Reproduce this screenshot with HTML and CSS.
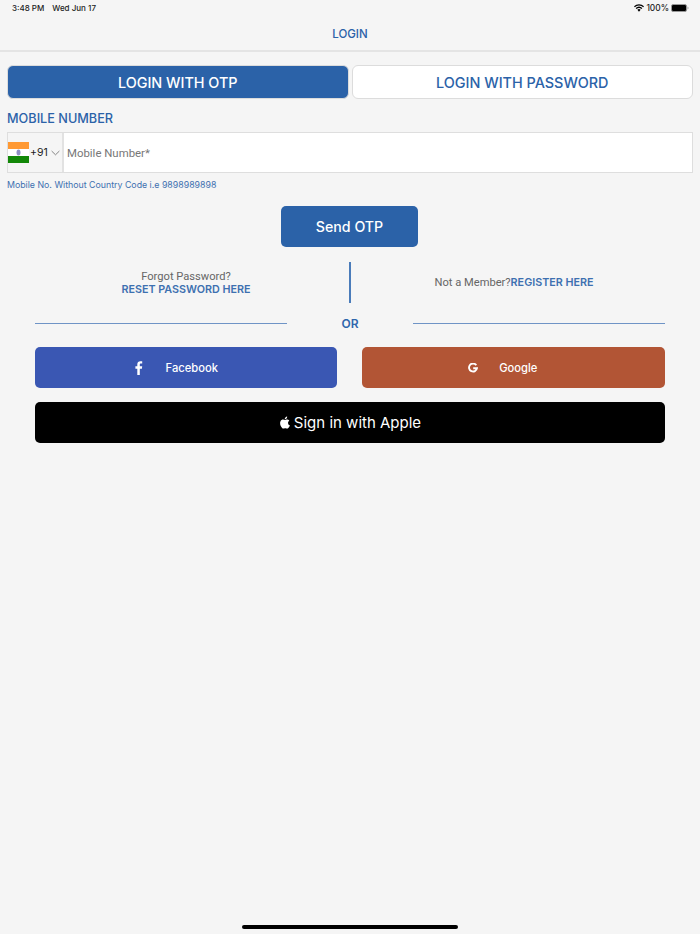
FILE: index.html
```html
<!DOCTYPE html>
<html lang="en">
<head>
  <meta charset="UTF-8" />
  <meta name="viewport" content="width=device-width, initial-scale=1" />
  <title>Login</title>
  <link rel="stylesheet" href="styles.css">
</head>
<body>
  <div class="screen">
    <div class="status-bar">
      <div class="status-left"><span>3:48 PM</span><span>Wed Jun 17</span></div>
      <div class="status-right">
        <svg class="wifi" width="10" height="8" viewBox="0 0 11 8"><path d="M5.500 8 3.700 6a2.600 2.600 0 0 1 3.600 0zM2.800 5.100 1.800 4a5.400 5.400 0 0 1 7.400 0l-1 1.100a4 4 0 0 0-5.400 0zM.9 3.100 0 2.100a8 8 0 0 1 11 0l-.9 1a6.700 6.700 0 0 0-9.200 0z" fill="#000"/></svg>
        <span>100%</span>
        <svg class="battery" width="18" height="8" viewBox="0 0 18 8"><rect x=".5" y=".5" width="15" height="7" rx="1.600" fill="#000" stroke="#999"/><path d="M16.500 2.600c.7.2 1 .7 1 1.400s-.3 1.200-1 1.400z" fill="#999"/></svg>
      </div>
    </div>

    <div class="nav-bar">LOGIN</div>

    <div class="tabs">
      <button class="tab tab-active">LOGIN WITH OTP</button>
      <button class="tab">LOGIN WITH PASSWORD</button>
    </div>

    <div class="field-label">MOBILE NUMBER</div>
    <div class="phone-group">
      <div class="country">
        <svg class="flag" width="21" height="21" viewBox="0 0 21 21">
          <rect width="21" height="7" fill="#ff9933"/>
          <rect y="7" width="21" height="7" fill="#fff"/>
          <rect y="14" width="21" height="7" fill="#138808"/>
          <ellipse cx="10.5" cy="10.5" rx="2" ry="3" fill="#8f8fc4"/>
        </svg>
        <span class="dial">+91</span>
        <svg class="chevron" width="9" height="6" viewBox="0 0 10 6"><path d="M.7.8 5 5 9.300.8" fill="none" stroke="#777" stroke-width="1"/></svg>
      </div>
      <div class="phone-input">Mobile Number*</div>
    </div>
    <div class="hint">Mobile No. Without Country Code i.e 9898989898</div>

    <div class="send-row"><button class="send-btn">Send OTP</button></div>

    <div class="links">
      <div class="link-col">
        <div class="muted">Forgot Password?</div>
        <div class="link-strong">RESET PASSWORD HERE</div>
      </div>
      <div class="links-divider"></div>
      <div class="link-col">
        <div><span class="muted">Not a Member?</span><span class="link-strong">REGISTER HERE</span></div>
      </div>
    </div>

    <div class="or-row">
      <div class="or-line"></div>
      <div class="or-text">OR</div>
      <div class="or-line"></div>
    </div>

    <div class="social">
      <div class="social-row">
        <button class="social-btn facebook">
          <svg width="8" height="14" viewBox="0 0 8 14"><path d="M2.300 14V7.700H.4V5.200h1.900V3.400C2.300 1.300 3.500.2 5.300.2c.9 0 1.600.1 1.900.1v2.200H6c-1 0-1.200.5-1.200 1.200v1.500h2.400l-.3 2.500H4.800V14z" fill="#fff"/></svg>
          <span>Facebook</span>
        </button>
        <button class="social-btn google">
          <svg width="10" height="10" viewBox="0 0 10 10"><path d="M8.300 2.200A4 4 0 1 0 9 5.200H5.200" fill="none" stroke="#fff" stroke-width="1.900"/></svg>
          <span>Google</span>
        </button>
      </div>
      <button class="apple-btn">
        <svg width="11" height="13" viewBox="0 0 14 17"><path d="M11.600 9c0-1.900 1.600-2.800 1.700-2.900-.9-1.300-2.300-1.500-2.800-1.500-1.200-.1-2.300.7-2.900.7s-1.500-.7-2.500-.7C3.800 4.600 2.600 5.300 1.900 6.500.5 8.900 1.500 12.500 2.900 14.500c.7 1 1.500 2.100 2.500 2 1 0 1.400-.6 2.600-.6s1.600.6 2.600.6 1.800-1 2.400-2c.8-1.100 1.100-2.200 1.100-2.300 0 0-2.500-.9-2.500-3.200zM9.700 3.200c.5-.7.9-1.600.8-2.600-.8 0-1.800.5-2.300 1.200-.5.6-1 1.500-.8 2.500.9 0 1.700-.5 2.300-1.100z" fill="#fff"/></svg>
        <span>Sign in with Apple</span>
      </button>
    </div>

    <div class="home-indicator"></div>
  </div>
</body>
</html>
```

FILE: styles.css
```css
* {
  box-sizing: border-box;
}
html, body {
  margin: 0;
  padding: 0;
}
body {
  background-color: #f5f5f5;
  font-family: 'Inter', 'Liberation Sans', sans-serif;
  color: #2b62a8;
}
button {
  font-family: inherit;
  cursor: pointer;
}
.screen {
  height: 934px;
  display: flex;
  flex-direction: column;
  overflow: hidden;
}

/* status bar */
.status-bar {
  height: 16px;
  padding: 0 11px 0 12px;
  display: flex;
  align-items: center;
  justify-content: space-between;
  font-size: 8.4px;
  font-weight: 500;
  color: #222;
}
.status-left {
  display: flex;
  gap: 8px;
  font-size: 8px;
}
.status-right {
  display: flex;
  align-items: center;
  gap: 2px;
}

/* nav */
.nav-bar {
  height: 36px;
  padding-top: 1px;
  border-bottom: 2px solid #e4e4e4;
  display: flex;
  align-items: center;
  justify-content: center;
  font-size: 11.5px;
  font-weight: 500;
}

/* tabs */
.tabs {
  margin: 13px 7px 0;
  display: flex;
  gap: 3px;
}
.tab {
  flex: 1;
  height: 34px;
  border: 1px solid #dcdcdc;
  border-radius: 6px;
  background-color: #fff;
  color: #2b62a8;
  font-size: 14.4px;
  font-weight: 500;
  padding: 0;
}
.tab-active {
  background-color: #2b62a8;
  color: #fff;
}

.field-label {
  margin: 12px 7px 0;
  height: 15px;
  line-height: 15px;
  font-size: 12.7px;
  font-weight: 500;
}

/* phone */
.phone-group {
  margin: 6px 7px 0;
  height: 41px;
  display: flex;
  border: 1px solid #dedede;
  background-color: #fff;
}
.country {
  width: 56px;
  background-color: #f5f5f5;
  border-right: 2px solid #e2e2e2;
  display: flex;
  align-items: center;
  flex-shrink: 0;
}
.flag {
  flex-shrink: 0;
}
.dial {
  margin-left: 1px;
  font-size: 10.5px;
  color: #222;
}
.chevron {
  margin-left: 3px;
}
.phone-input {
  flex: 1;
  padding-left: 3px;
  display: flex;
  align-items: center;
  font-family: 'Roboto', sans-serif;
  font-size: 11.4px;
  color: #777;
}
.hint {
  margin: 6px 7px 0;
  height: 11px;
  line-height: 11px;
  font-size: 8.8px;
  color: #3d70b0;
}

/* send */
.send-row {
  margin-top: 16px;
  padding-right: 1px;
  display: flex;
  justify-content: center;
}
.send-btn {
  width: 137px;
  height: 41px;
  border: none;
  border-radius: 5px;
  background-color: #2b62a8;
  color: #fff;
  font-size: 14.2px;
  font-weight: 500;
}

/* links */
.links {
  margin: 15px 35px 0;
  height: 41px;
  display: flex;
  gap: 12px;
}
.link-col {
  flex: 1;
  display: flex;
  flex-direction: column;
  align-items: center;
  justify-content: center;
  font-size: 10.75px;
  line-height: 13px;
}
.links-divider {
  width: 2px;
  background-color: #4a7cba;
}
.muted {
  font-family: 'Roboto', sans-serif;
  font-size: 11.15px;
  color: #666;
}
.link-strong {
  color: #3d70b0;
  font-weight: 600;
}

/* or */
.or-row {
  margin: 13px 35px 0;
  height: 14px;
  display: flex;
  align-items: center;
}
.or-line {
  flex: 1;
  height: 1px;
  background-color: #6f94c6;
}
.or-text {
  width: 126px;
  text-align: center;
  font-size: 12px;
  font-weight: 600;
  color: #2f66ac;
}

/* social */
.social {
  margin: 17px 35px 0;
  display: flex;
  flex-direction: column;
  gap: 14px;
}
.social-row {
  display: flex;
  gap: 25px;
}
.social-btn {
  flex: 1;
  height: 41px;
  border: none;
  border-radius: 5px;
  color: #fff;
  font-size: 11.2px;
  font-weight: 500;
  display: flex;
  align-items: center;
  justify-content: center;
  gap: 23px;
  padding: 0 19px 0 0;
}
.facebook {
  background-color: #3a57b3;
}
.google {
  background-color: #b25535;
  gap: 21px;
  padding-right: 21px;
}
.apple-btn {
  height: 41px;
  border: none;
  border-radius: 5px;
  background-color: #000;
  color: #fff;
  font-size: 15px;
  font-weight: 400;
  display: flex;
  align-items: center;
  justify-content: center;
  gap: 4px;
  padding: 0;
}

/* home bar */
.home-indicator {
  width: 216px;
  height: 4px;
  margin: auto auto 5px;
  border-radius: 2px;
  background-color: #000;
}
```
